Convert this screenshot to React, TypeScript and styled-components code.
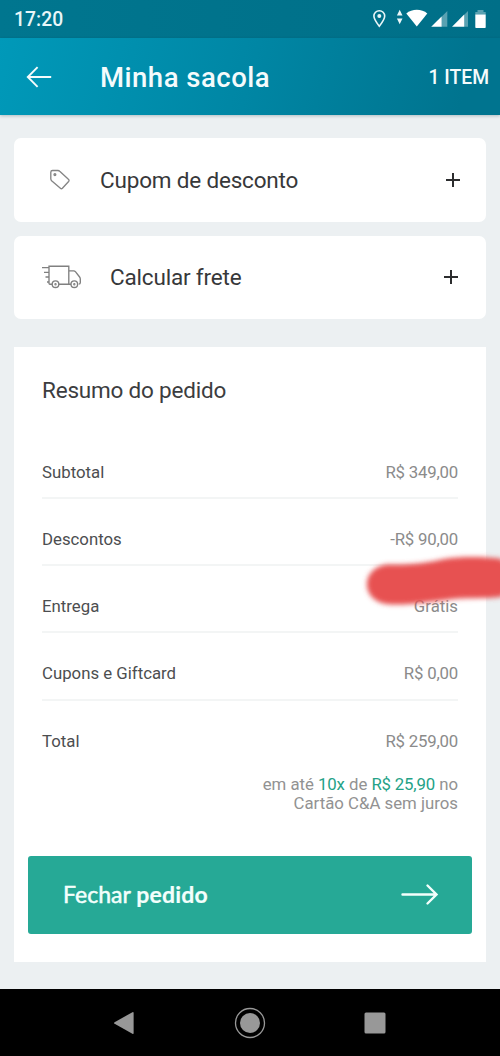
import React from 'react';
import styled, { createGlobalStyle } from 'styled-components';

const GlobalStyle = createGlobalStyle`
  * { box-sizing: border-box; }
  body { margin: 0; background: #ecf0f2; font-family: Roboto, "Liberation Sans", sans-serif; }
  button { font: inherit; border: 0; padding: 0; background: none; color: inherit; }
  svg { display: block; flex: none; overflow: visible; }
`;

const Screen = styled.div`
  width: 500px;
  height: 1056px;
  display: flex;
  flex-direction: column;
  overflow: hidden;
  background: #ecf0f2;
`;

const StatusBar = styled.div`
  height: 38px;
  flex: none;
  padding: 0 13px 0 14px;
  display: flex;
  align-items: center;
  justify-content: space-between;
  background: linear-gradient(90deg, #00768f, #006f88);
  color: #e9f6f8;
`;

const Clock = styled.span`
  font-size: 19.3px;
  line-height: 22px;
  font-weight: 500;
  letter-spacing: 0.1px;
  padding-top: 2px;
`;

const Header = styled.header`
  height: 77px;
  flex: none;
  display: flex;
  align-items: center;
  padding: 1px 11px 0 26px;
  color: #f4fbfc;
  background: linear-gradient(105deg, #0099b9 0%, #0086a4 50%, #00748f 92%);
  box-shadow: 0 1px 3px rgba(0, 40, 50, 0.25);
`;

const Title = styled.h1`
  flex: 1;
  margin: 0 0 0 48px;
  padding-top: 2px;
  font-size: 27.5px;
  line-height: 32px;
  font-weight: 500;
  letter-spacing: 0.5px;
`;

const ItemCount = styled.span`
  font-size: 19.3px;
  font-weight: 500;
`;

const Content = styled.main`
  flex: 1;
  display: flex;
  flex-direction: column;
  gap: 14px;
  padding: 23px 14px 0;
`;

const Option = styled.button<{ $inset: number }>`
  height: 83.5px;
  flex: none;
  display: flex;
  align-items: center;
  width: 100%;
  padding: 0 ${(p) => p.$inset}px 0 28px;
  border-radius: 7px;
  background: #fff;
  color: #37383a;
  text-align: left;
`;

const OptionIcon = styled.span<{ $width: number }>`
  width: ${(p) => p.$width}px;
  display: flex;
`;

const OptionLabel = styled.span`
  flex: 1;
  font-size: 22.5px;
  line-height: 28px;
  letter-spacing: -0.18px;
`;

const Summary = styled.section`
  height: 615px;
  margin-top: 14px;
  padding: 28px 14px 0;
  display: flex;
  flex-direction: column;
  background: #fff;
`;

const SummaryTitle = styled.h2`
  margin: 0 14px 37px;
  font-size: 22.5px;
  line-height: 30px;
  font-weight: 400;
  letter-spacing: -0.2px;
  color: #3c3d3f;
`;

const Rows = styled.dl`
  margin: 0 14px;
`;

const Row = styled.div`
  height: 67.2px;
  padding-top: 15px;
  display: flex;
  align-items: center;
  justify-content: space-between;
  font-size: 16.8px;
  line-height: 20px;

  &:first-child { height: 57px; padding-top: 5px; }
  &:not(:last-child) { border-bottom: 2px solid #f3f5f5; }
  &:last-child { height: 62px; padding-top: 18px; }
`;

const RowLabel = styled.dt`
  color: #4c4e50;
`;

const RowValue = styled.dd<{ $numeric: boolean }>`
  position: relative;
  margin: 0;
  color: #8b8b8b;
  letter-spacing: ${(p) => (p.$numeric ? '-0.2px' : 'normal')};
`;

const Scribble = styled.svg`
  position: absolute;
  right: -42px;
  top: -43px;
`;

const Installments = styled.p`
  margin: 12px 14px 0;
  font-size: 16.8px;
  line-height: 19.5px;
  text-align: right;
  color: #929292;

  b { font-weight: 400; color: #24a287; letter-spacing: -0.18px; }
`;

const Checkout = styled.button`
  margin-top: auto;
  margin-bottom: 28px;
  height: 78px;
  flex: none;
  padding: 0 34px 0 35px;
  display: flex;
  align-items: center;
  justify-content: space-between;
  border-radius: 3px;
  background: #26a996;
  color: #f3fffc;
`;

const CheckoutLabel = styled.span`
  font-family: Lato, sans-serif;
  font-size: 23px;
  line-height: 28px;
  font-weight: 400;
  padding-bottom: 2px;
  -webkit-text-stroke: 0.5px currentColor;

  strong { font-weight: 700; letter-spacing: 0.2px; -webkit-text-stroke: 0.2px currentColor; }
`;

const NavBar = styled.nav`
  height: 67px;
  flex: none;
  display: flex;
  align-items: center;
  justify-content: center;
  gap: 98px;
  padding-right: 1px;
  background: #000;
`;

const StatusIcons = () => (
  <svg width="118" height="22" viewBox="369 8 118 22">
    <path d="M379.3 26.3c-3-3.8-5.4-7-5.4-10.2a5.4 5.4 0 0 1 10.8 0c0 3.2-2.400 6.400-5.400 10.200z" fill="none" stroke="#e9f6f8" strokeWidth="1.6" />
    <circle cx="379.300" cy="16" r="2" fill="#e9f6f8" />
    <path d="M399.700 9.800l2.800 5.600h-5.600zM399.700 24.200l2.800-5.600h-5.600z" fill="#e9f6f8" />
    <path d="M406.300 13.500c5.500-5 15.500-5 21 0L416.800 26.500z" fill="#fff" />
    <path d="M447.300 11v15.800h-6V17z" fill="#fff" opacity="0.35" />
    <path d="M441.600 16.600v10.200h-10.400z" fill="#fff" />
    <path d="M468 11v15.800h-4V15z" fill="#fff" opacity="0.35" />
    <path d="M464.200 14.600v12.200H452z" fill="#fff" />
    <path d="M477.500 10h6v2h2.200v2.800h-10.400V12h2.200z" fill="#fff" opacity="0.35" />
    <path d="M475.300 14.600h10.400v12.700a.7.7 0 0 1-.7.7h-9a.7.7 0 0 1-.7-.7z" fill="#fff" />
  </svg>
);

const BackArrow = () => (
  <svg width="26" height="22" viewBox="0 0 26 22" fill="none" stroke="currentColor" strokeWidth="1.900">
    <path d="M25.200 11H1.800M11.600 1.200L1.800 11l9.800 9.800" />
  </svg>
);

const TagIcon = () => (
  <svg width="40" height="22" viewBox="0 0 40 22" fill="none" stroke="#858585" strokeWidth="1.350" strokeLinejoin="round">
    <path d="M10.500 1.500h5.400q1 0 1.800.8l8.700 8q1.200 1 .2 2.200l-6.200 6.800q-1 1-2 0L9.600 11.800q-.8-.8-.8-2V3.200q0-1.700 1.700-1.700z" />
    <circle cx="12.900" cy="5.600" r=".9" />
  </svg>
);

const TruckIcon = () => (
  <svg width="40" height="24" viewBox="0 0 40 24" fill="none" stroke="#808080" strokeWidth="1.350">
    <path d="M0 2.600h7M2 7.300h5M3.500 12h3.500M5 17h2M7 18.500V1.200h19.800v18M10.200 19.200H7.600Q7 19 7 18.200M16.800 19.200h12.300M26.800 5.800h4.800q1.200 0 2 1l4 5.200q.7.900.7 2v3.800q0 1.400-1.600 1.400" />
    <circle cx="13.500" cy="19.200" r="3.300" />
    <circle cx="32.300" cy="19.200" r="3.300" />
    <circle cx="13.500" cy="19.200" r=".5" />
    <circle cx="32.300" cy="19.200" r=".5" />
  </svg>
);

const PlusIcon = () => (
  <svg width="14" height="14" viewBox="0 0 14 14" stroke="#2c2d2e" strokeWidth="2">
    <path d="M0 7h14M7 0v14" />
  </svg>
);

const ForwardArrow = () => (
  <svg width="37" height="22" viewBox="0 0 37 22" fill="none" stroke="currentColor" strokeWidth="2.400" strokeLinecap="round">
    <path d="M1.500 10.500h33.500M26.500 1.500L35.500 10.500l-9 9" />
  </svg>
);

const MarkerStroke = () => (
  <Scribble width="140" height="56" viewBox="360 553 140 56">
    <defs>
      <filter id="soft" x="-20%" y="-30%" width="140%" height="160%">
        <feGaussianBlur stdDeviation="2.600" />
      </filter>
    </defs>
    <path
      d="M386 564.500C410 565 427 563 444 559C464 556 484 557 500 558.500C512 565 510 592 501 597C484 599 465 597 446 600C424 602.500 402 606 386 604C361 600 360 569 386 564.500z"
      fill="#e75151"
      filter="url(#soft)"
    />
  </Scribble>
);

const rows = [
  { label: 'Subtotal', value: 'R$ 349,00' },
  { label: 'Descontos', value: '-R$ 90,00' },
  { label: 'Entrega', value: 'Grátis', marked: true },
  { label: 'Cupons e Giftcard', value: 'R$ 0,00' },
  { label: 'Total', value: 'R$ 259,00' },
];

export default function App() {
  return (
    <Screen>
      <GlobalStyle />
      <StatusBar>
        <Clock>17:20</Clock>
        <StatusIcons />
      </StatusBar>
      <Header>
        <BackArrow />
        <Title>Minha sacola</Title>
        <ItemCount>1 ITEM</ItemCount>
      </Header>
      <Content>
        <Option $inset={26}>
          <OptionIcon $width={58}><TagIcon /></OptionIcon>
          <OptionLabel>Cupom de desconto</OptionLabel>
          <PlusIcon />
        </Option>
        <Option $inset={28}>
          <OptionIcon $width={68}><TruckIcon /></OptionIcon>
          <OptionLabel>Calcular frete</OptionLabel>
          <PlusIcon />
        </Option>
        <Summary>
          <SummaryTitle>Resumo do pedido</SummaryTitle>
          <Rows>
            {rows.map((row) => (
              <Row key={row.label}>
                <RowLabel>{row.label}</RowLabel>
                <RowValue $numeric={row.value.includes('R$')}>
                  {row.value}
                  {row.marked && <MarkerStroke />}
                </RowValue>
              </Row>
            ))}
          </Rows>
          <Installments>
            em até <b>10x</b> de <b>R$ 25,90</b> no
            <br />
            Cartão C&amp;A sem juros
          </Installments>
          <Checkout>
            <CheckoutLabel>Fechar <strong>pedido</strong></CheckoutLabel>
            <ForwardArrow />
          </Checkout>
        </Summary>
      </Content>
      <NavBar>
        <svg width="22" height="24" viewBox="1 0 22 24" fill="#989898">
          <path d="M1.600 11.200L19.400 1.200q1.200-.6 1.200.6v20.400q0 1.200-1.200.6L1.600 12.800q-1.200-.8 0-1.600z" />
        </svg>
        <svg width="32" height="32" viewBox="0 0 32 32" fill="#989898">
          <circle cx="16" cy="16" r="14.500" fill="none" stroke="#989898" strokeWidth="1.300" />
          <circle cx="16" cy="16" r="10" />
        </svg>
        <svg width="22" height="22" viewBox="0 0 22 22" fill="#989898">
          <rect x="0.500" y="0.500" width="21" height="21" rx="1.500" />
        </svg>
      </NavBar>
    </Screen>
  );
}
